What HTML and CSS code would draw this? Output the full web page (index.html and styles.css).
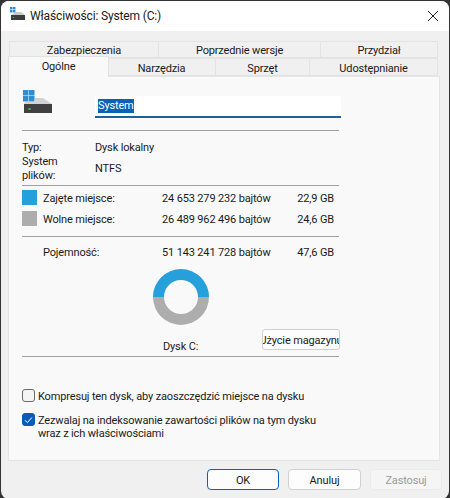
FILE: index.html

```html
<!DOCTYPE html>
<html lang="pl">
<head>
  <meta charset="UTF-8" />
  <title>Właściwości: System (C:)</title>
  <link rel="stylesheet" href="styles.css">
</head>
<body>
  <div class="window">
    <div class="titlebar">
      <svg class="title-icon" width="16" height="14" viewBox="0 0 16 14">
        <rect x="0" y="0" width="2.5" height="2.5" fill="#2b8fd6"/>
        <rect x="3" y="0" width="2.5" height="2.5" fill="#2b8fd6"/>
        <rect x="0" y="3" width="2.5" height="2.5" fill="#2b8fd6"/>
        <rect x="3" y="3" width="2.5" height="2.5" fill="#2b8fd6"/>
        <path d="M6 5h5l4 3H1z" fill="#c9c9c9"/>
        <rect x="1" y="8" width="14" height="5" fill="#3d3d3d"/>
        <rect x="3" y="10" width="1" height="1" fill="#45c04a"/>
      </svg>
      <span class="title-text">Właściwości: System (C:)</span>
      <svg class="close-icon" width="12" height="12" viewBox="0 0 12 12">
        <path d="M1 1l10 10M11 1L1 11" stroke="#222" stroke-width="1" fill="none"/>
      </svg>
    </div>

    <div class="content">
      <div class="tabs-back">
        <div class="tab tab-zab">Zabezpieczenia</div>
        <div class="tab tab-pop">Poprzednie wersje</div>
        <div class="tab tab-prz">Przydział</div>
      </div>
      <div class="tabs-front">
        <div class="tab tab-active">Ogólne</div>
        <div class="tab tab-nar">Narzędzia</div>
        <div class="tab tab-spr">Sprzęt</div>
        <div class="tab tab-udo">Udostępnianie</div>
      </div>

      <div class="panel">
        <div class="name-row">
          <svg class="drive-icon" width="30" height="25" viewBox="0 0 30 25">
            <rect x="0" y="0" width="5.5" height="5.5" fill="#2b8fd6"/>
            <rect x="6" y="0" width="5.5" height="5.5" fill="#2b8fd6"/>
            <rect x="0" y="6" width="5.5" height="5.5" fill="#2b8fd6"/>
            <rect x="6" y="6" width="5.5" height="5.5" fill="#2b8fd6"/>
            <path d="M12 8h8l9 6H1l1-2h10z" fill="#d2d2d2"/>
            <rect x="1" y="14" width="28" height="9" fill="#404040"/>
            <rect x="5.5" y="18" width="2" height="2" fill="#45c04a"/>
          </svg>
          <div class="name-input"><span class="selection">System</span></div>
        </div>
        <hr class="sep sep-name">

        <div class="info-row info-typ">
          <span class="info-label">Typ:</span>
          <span class="info-value">Dysk lokalny</span>
        </div>
        <div class="info-row info-fs">
          <span class="info-label">System<br>plików:</span>
          <span class="info-value">NTFS</span>
        </div>
        <hr class="sep sep-fs">

        <div class="space-row">
          <span class="swatch swatch-used"></span>
          <span class="space-label">Zajęte miejsce:</span>
          <span class="space-bytes">24 653 279 232 bajtów</span>
          <span class="space-gb">22,9 GB</span>
        </div>
        <div class="space-row">
          <span class="swatch swatch-free"></span>
          <span class="space-label">Wolne miejsce:</span>
          <span class="space-bytes">26 489 962 496 bajtów</span>
          <span class="space-gb">24,6 GB</span>
        </div>
        <hr class="sep sep-space">
        <div class="space-row">
          <span class="swatch-empty"></span>
          <span class="space-label">Pojemność:</span>
          <span class="space-bytes">51 143 241 728 bajtów</span>
          <span class="space-gb">47,6 GB</span>
        </div>

        <div class="donut-row">
          <svg width="58" height="58" viewBox="0 0 58 58">
            <path d="M1 29a28 28 0 0 1 56 0H46a17 17 0 0 0-34 0z" fill="#26a0da"/>
            <path d="M1 29a28 28 0 0 0 56 0H46a17 17 0 0 1-34 0z" fill="#adadad"/>
          </svg>
        </div>
        <div class="drive-row">
          <span class="drive-label">Dysk C:</span>
          <div class="storage-btn"><span>Użycie magazynu</span></div>
        </div>
        <hr class="sep sep-drive">

        <label class="check check-first">
          <span class="box"></span>
          <span class="check-text">Kompresuj ten dysk, aby zaoszczędzić miejsce na dysku</span>
        </label>
        <label class="check">
          <span class="box box-on">
            <svg width="9" height="8" viewBox="0 0 9 8"><path d="M1 4.2l2.4 2.4L8 1.4" stroke="#fff" stroke-width="1" fill="none"/></svg>
          </span>
          <span class="check-text">Zezwalaj na indeksowanie zawartości plików na tym dysku<br>wraz z ich właściwościami</span>
        </label>
      </div>

      <div class="footer">
        <button class="btn btn-default">OK</button>
        <button class="btn btn-cancel">Anuluj</button>
        <button class="btn btn-disabled">Zastosuj</button>
      </div>
    </div>
  </div>
</body>
</html>
```

FILE: styles.css

```css
* {
  box-sizing: border-box;
}

html, body {
  margin: 0;
  height: 100%;
}

body {
  background-color: #333;
  font-family: Roboto, "Liberation Sans", sans-serif;
  font-size: 11px;
  letter-spacing: -0.15px;
  color: #1a1a1a;
}

.window {
  height: 498px;
  margin: 1px 1px 0 1px;
  border-radius: 8px;
  overflow: hidden;
  background-color: #f0f0f0;
  display: flex;
  flex-direction: column;
}

.titlebar {
  height: 30px;
  flex: none;
  background-color: #fff;
  display: flex;
  align-items: center;
  padding: 0 10px 0 9px;
}

.title-icon {
  margin-right: 4px;
  margin-bottom: 4px;
}

.title-text {
  font-size: 12px;
  flex: 1;
}

.content {
  flex: 1;
  padding: 10px 7px 0 7px;
  display: flex;
  flex-direction: column;
}

.tabs-back,
.tabs-front {
  display: flex;
  text-align: center;
}

.tabs-back {
  height: 17px;
  margin-left: 1px;
}

.tabs-front {
  height: 18px;
}

.tab {
  border: 1px solid #e3e3e3;
  border-left: none;
  background-color: #f0f0f0;
  line-height: 18px;
}

.tab-zab {
  width: 150px;
  border-left: 1px solid #e3e3e3;
}

.tab-pop {
  width: 162px;
}

.tab-prz {
  width: 117px;
}

.tab-active {
  width: 101px;
  height: 21px;
  margin-top: -2px;
  margin-right: -1px;
  background-color: #f9f9f9;
  border-left: 1px solid #e3e3e3;
  border-bottom: none;
  position: relative;
  z-index: 1;
  line-height: 19px;
}

.tab-nar,
.tab-spr,
.tab-udo {
  line-height: 19px;
}

.tab-nar {
  width: 108px;
}

.tab-spr {
  width: 94px;
}

.tab-udo {
  width: 128px;
}

.panel {
  height: 385px;
  width: 432px;
  background-color: #f9f9f9;
  border: 1px solid #e5e5e5;
  padding: 0 13px;
}

.name-row {
  display: flex;
  height: 43px;
  padding-top: 13px;
}

.drive-icon {
  margin: 0 42px 0 1px;
}

.name-input {
  width: 246px;
  height: 22px;
  margin-top: 6px;
  background-color: #fff;
  border-bottom: 2px solid #1c6199;
  padding: 3px 0 0 3px;
  line-height: 14px;
}

.selection {
  display: inline-block;
  background-color: #0a62b8;
  color: #fff;
  height: 14px;
}

.sep {
  border: none;
  border-top: 1px solid #a0a0a0;
  margin: 0;
  width: 317px;
}

.sep-name {
  margin-top: 10px;
}

.info-row {
  display: flex;
  align-items: center;
}

.info-typ {
  height: 16px;
  margin-top: 7px;
}

.info-fs {
  height: 28px;
  line-height: 14px;
}

.info-label {
  width: 73px;
  padding-top: 2px;
}

.info-value {
  padding-top: 2px;
}

.sep-fs {
  margin-top: 3px;
}

.space-row {
  display: flex;
  align-items: center;
  height: 21px;
  width: 312px;
}

.sep-fs + .space-row {
  margin-top: 1px;
}

.swatch,
.swatch-empty {
  width: 15px;
  height: 15px;
  margin-right: 6px;
  flex: none;
}

.swatch-used {
  background-color: #26a0da;
}

.swatch-free {
  background-color: #adadad;
}

.space-label,
.space-bytes,
.space-gb {
  padding-top: 2px;
}

.space-label {
  width: 119px;
}

.space-bytes {
  width: 108px;
  white-space: nowrap;
}

.space-gb {
  flex: 1;
  text-align: right;
}

.sep-space {
  margin-top: 7px;
  margin-bottom: 4px;
}

.donut-row {
  display: flex;
  justify-content: center;
  width: 317px;
  margin-top: 6px;
}

.drive-row {
  display: flex;
  height: 21px;
  margin-top: 3px;
  align-items: flex-end;
}

.drive-label {
  margin-left: 141px;
  width: 99px;
  line-height: 16px;
  margin-bottom: -5px;
}

.storage-btn {
  width: 78px;
  height: 21px;
  background-color: #fdfdfd;
  border: 1px solid #d0d0d0;
  border-radius: 3px;
  display: flex;
  justify-content: center;
  align-items: center;
  overflow: hidden;
  white-space: nowrap;
}

.storage-btn span {
  flex: none;
  padding-top: 2px;
}

.sep-drive {
  margin-top: 6px;
}

.check {
  display: flex;
  align-items: flex-start;
  line-height: 13px;
  white-space: nowrap;
}

.check-first {
  margin-top: 32px;
  margin-bottom: 10px;
}

.check-text {
  padding-top: 1px;
}

.box {
  width: 13px;
  height: 13px;
  flex: none;
  margin-right: 3px;
  border: 1px solid #6b6b6b;
  border-radius: 3px;
  background-color: #f4f4f4;
  display: flex;
  align-items: center;
  justify-content: center;
}

.box-on {
  background-color: #0a5bb5;
  border-color: #0a5bb5;
}

.footer {
  flex: 1;
  display: flex;
  justify-content: flex-end;
  gap: 9px;
  padding: 8px 0 0 0;
}

.btn {
  width: 72px;
  height: 21px;
  padding: 1px 0 0;
  font: inherit;
  letter-spacing: inherit;
  color: inherit;
  background-color: #fdfdfd;
  border: 1px solid #d0d0d0;
  border-radius: 4px;
}

.btn-default {
  border-color: #0a62b8;
}

.btn-cancel {
  width: 73px;
}

.btn-disabled {
  color: #9a9a9a;
  background-color: #f5f5f5;
  border-color: #ebebeb;
}
```
